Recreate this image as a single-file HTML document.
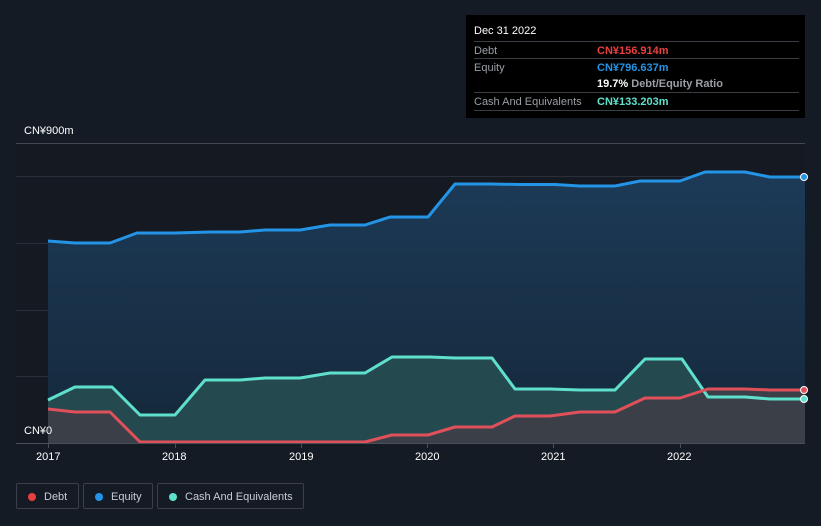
<!DOCTYPE html>
<html><head><meta charset="utf-8"><style>
body{margin:0;width:821px;height:526px;background:#151b25;font-family:"Liberation Sans",sans-serif;overflow:hidden;position:relative}
.tt{position:absolute;left:466px;top:15px;width:339px;height:103px;background:#000;color:#fff;font-size:11px}
.row{position:absolute;left:8px;width:325px;border-top:1px solid #3a3d44;height:17px}
.l{position:absolute;left:0;top:3px;color:#9a9ea6}
.v{position:absolute;left:123px;top:3px;font-weight:bold}
.leg{position:absolute;top:483px;height:26px;border:1px solid #3a3f49;border-radius:2px;color:#c9ccd2;font-size:11px;line-height:26px;box-sizing:border-box}
.leg i{position:absolute;left:11px;top:9px;width:8px;height:8px;border-radius:50%}
.leg span{position:absolute;left:27px}
.ax{position:absolute;color:#fff;font-size:11px}
</style></head><body>
<svg width="821" height="526" style="position:absolute;left:0;top:0">
<defs><linearGradient id="eg" x1="0" y1="0" x2="0" y2="1"><stop offset="0" stop-color="#1c3a57"/><stop offset="1" stop-color="#15283a"/></linearGradient></defs>
<rect x="16" y="143" width="789" height="300" fill="#141922"/>
<g stroke="#2a2f39" stroke-width="1">
<line x1="16" y1="143.5" x2="805" y2="143.5" stroke="#43474f"/>
<line x1="16" y1="176.5" x2="805" y2="176.5"/>
<line x1="16" y1="243.5" x2="805" y2="243.5"/>
<line x1="16" y1="310.5" x2="805" y2="310.5"/>
<line x1="16" y1="376.5" x2="805" y2="376.5"/>
</g>
<polygon fill="url(#eg)" points="48,241 75,243 110,243 137,233 175,233 210,232 240,232 265,230 300,230 330,225 365,225 390,217 428,217 455,184 490,184 520,184.5 555,184.5 580,186 615,186 640,181 680,181 705,172 745,172 770,177 805,177 805,443 48,443"/>
<polygon fill="#244a50" points="48,400 75,387 112,387 140,415 175,415 205,380 240,380 265,378 300,378 330,373 365,373 392,357 430,357 455,358 492,358 515,389 550,389 580,390 615,390 645,359 682,359 708,397 745,397 770,399 805,399 805,443 48,443"/>
<polygon fill="#3a3f48" points="48,409 75,412 110,412 140,442 300,442 365,442 392,435 428,435 455,427 492,427 515,416 550,416 580,412 615,412 645,398 680,398 708,389 745,389 770,390 805,390 805,443 48,443"/>
<g fill="none" stroke-width="3" stroke-linejoin="round">
<polyline stroke="#2394e6" points="48,241 75,243 110,243 137,233 175,233 210,232 240,232 265,230 300,230 330,225 365,225 390,217 428,217 455,184 490,184 520,184.5 555,184.5 580,186 615,186 640,181 680,181 705,172 745,172 770,177 805,177"/>
<polyline stroke="#5fe0cc" points="48,400 75,387 112,387 140,415 175,415 205,380 240,380 265,378 300,378 330,373 365,373 392,357 430,357 455,358 492,358 515,389 550,389 580,390 615,390 645,359 682,359 708,397 745,397 770,399 805,399"/>
<polyline stroke="#e0505a" points="48,409 75,412 110,412 140,442 300,442 365,442 392,435 428,435 455,427 492,427 515,416 550,416 580,412 615,412 645,398 680,398 708,389 745,389 770,390 805,390"/>
</g>
<line x1="16" y1="443.5" x2="805" y2="443.5" stroke="#4a4e56"/>
<g stroke="#4a4e56"><line x1="48.5" y1="443" x2="48.5" y2="448"/><line x1="175.5" y1="443" x2="175.5" y2="448"/><line x1="301.5" y1="443" x2="301.5" y2="448"/><line x1="427.5" y1="443" x2="427.5" y2="448"/><line x1="553.5" y1="443" x2="553.5" y2="448"/><line x1="680.5" y1="443" x2="680.5" y2="448"/></g>
<circle cx="804" cy="177" r="3.5" fill="#2394e6" stroke="#fff" stroke-width="1"/>
<circle cx="804" cy="390" r="3.5" fill="#e0505a" stroke="#fff" stroke-width="1"/>
<circle cx="804" cy="399" r="3.5" fill="#5fe0cc" stroke="#fff" stroke-width="1"/>
</svg>
<div class="ax" style="left:24px;top:125px">CN¥900m</div>
<div class="ax" style="left:24px;top:425px">CN¥0</div>
<div class="ax" style="left:36px;top:451px">2017</div>
<div class="ax" style="left:162px;top:451px">2018</div>
<div class="ax" style="left:289px;top:451px">2019</div>
<div class="ax" style="left:415px;top:451px">2020</div>
<div class="ax" style="left:541px;top:451px">2021</div>
<div class="ax" style="left:667px;top:451px">2022</div>
<div class="tt">
<div style="position:absolute;left:8px;top:10px">Dec 31 2022</div>
<div class="row" style="top:26px"><span class="l">Debt</span><span class="v" style="color:#e8403f">CN¥156.914m</span></div>
<div class="row" style="top:43px"><span class="l">Equity</span><span class="v" style="color:#2394e6">CN¥796.637m</span></div>
<div class="row" style="top:60px;border:0"><span class="v">19.7% <span style="color:#9a9ea6">Debt/Equity Ratio</span></span></div>
<div class="row" style="top:77px"><span class="l">Cash And Equivalents</span><span class="v" style="color:#5fe0cc">CN¥133.203m</span></div>
<div class="row" style="top:95px;height:0"></div>
</div>
<div class="leg" style="left:16px;width:63px"><i style="background:#e8403f"></i><span>Debt</span></div>
<div class="leg" style="left:83px;width:70px"><i style="background:#2394e6"></i><span>Equity</span></div>
<div class="leg" style="left:157px;width:147px"><i style="background:#5fe0cc"></i><span>Cash And Equivalents</span></div>
</body></html>
